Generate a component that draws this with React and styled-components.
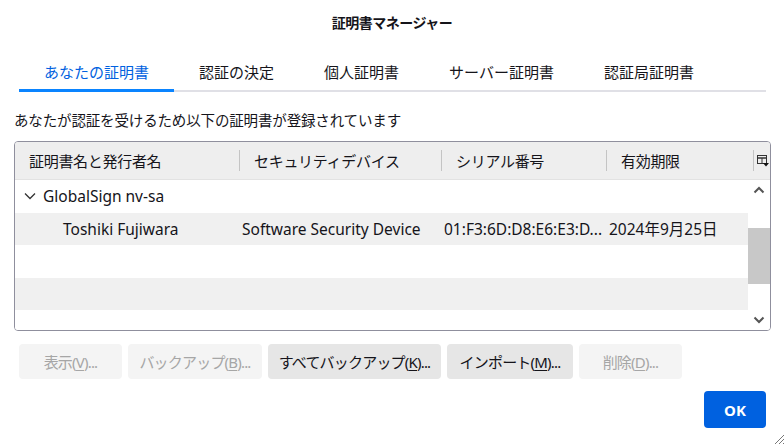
import React from 'react';
import styled, { createGlobalStyle } from 'styled-components';

const GlobalStyle = createGlobalStyle`
  html, body {
    margin: 0;
    padding: 0;
    background: #ffffff;
  }
  body {
    font-family: "Noto Sans", "Noto Sans CJK JP", sans-serif;
    color: #15141a;
  }
`;

const tabs = ['あなたの証明書', '認証の決定', '個人証明書', 'サーバー証明書', '認証局証明書'];

const columns = [
  { title: '証明書名と発行者名', width: 224 },
  { title: 'セキュリティデバイス', width: 202 },
  { title: 'シリアル番号', width: 165 },
  { title: '有効期限', width: 147 },
];

const buttons = [
  { label: '表示', key: 'V', width: 103, disabled: true },
  { label: 'バックアップ', key: 'B', width: 134, disabled: true },
  { label: 'すべてバックアップ', key: 'K', width: 173, disabled: false },
  { label: 'インポート', key: 'M', width: 126, disabled: false },
  { label: '削除', key: 'D', width: 103, disabled: true },
];

function App() {
  return (
    <>
      <GlobalStyle />
      <Dialog>
        <Title>証明書マネージャー</Title>
        <TabBar>
          {tabs.map((t, i) => (
            <Tab key={t} $active={i === 0}>{t}</Tab>
          ))}
        </TabBar>
        <Description>あなたが認証を受けるため以下の証明書が登録されています</Description>
        <TableBox>
          <HeaderRow>
            {columns.map((c, i) => (
              <HeaderCell key={c.title} $width={c.width} $sep={i > 0}>{c.title}</HeaderCell>
            ))}
            <PickerCell>
              <svg width="12" height="12" viewBox="0 0 12 12">
                <rect x="0.5" y="0.5" width="9" height="8" fill="none" stroke="#333" strokeWidth="1" />
                <line x1="0.5" y1="3" x2="9.5" y2="3" stroke="#333" strokeWidth="1.4" />
                <line x1="5" y1="3" x2="5" y2="8.5" stroke="#333" strokeWidth="1" />
                <path d="M6 8 L12 8 L9 11.5 Z" fill="#111" />
              </svg>
            </PickerCell>
          </HeaderRow>
          <Body>
            <Rows>
              <Row>
                <GroupCell>
                  <svg width="12" height="8" viewBox="0 0 12 8">
                    <path d="M1 1.5 L6 6.5 L11 1.5" fill="none" stroke="#333" strokeWidth="1.3" />
                  </svg>
                  GlobalSign nv-sa
                </GroupCell>
              </Row>
              <Row $shade>
                <Cell $width={224} $indent={48}>Toshiki Fujiwara</Cell>
                <Cell $width={202}>Software Security Device</Cell>
                <Cell $width={165}>01:F3:6D:D8:E6:E3:D...</Cell>
                <Cell>2024年9月25日</Cell>
              </Row>
              <Row />
              <Row $shade />
              <Row />
            </Rows>
            <ScrollBar>
              <ArrowBox>
                <svg width="12" height="8" viewBox="0 0 12 8">
                  <path d="M1.5 6.5 L6 2 L10.5 6.5" fill="none" stroke="#555" strokeWidth="2" />
                </svg>
              </ArrowBox>
              <Track>
                <Thumb />
              </Track>
              <ArrowBox>
                <svg width="12" height="8" viewBox="0 0 12 8">
                  <path d="M1.5 1.5 L6 6 L10.5 1.5" fill="none" stroke="#555" strokeWidth="2" />
                </svg>
              </ArrowBox>
            </ScrollBar>
          </Body>
        </TableBox>
        <ButtonRow>
          {buttons.map((b) => (
            <ActionButton key={b.key} $width={b.width} $disabled={b.disabled}>
              {b.label}(<u>{b.key}</u>)...
            </ActionButton>
          ))}
        </ButtonRow>
        <Footer>
          <OkButton>OK</OkButton>
        </Footer>
        <Grip>
          <svg width="14" height="14" viewBox="0 0 14 14">
            <line x1="14" y1="2" x2="2" y2="14" stroke="#777" strokeWidth="1" />
            <line x1="14" y1="6" x2="6" y2="14" stroke="#777" strokeWidth="1" />
            <line x1="14" y1="10" x2="10" y2="14" stroke="#777" strokeWidth="1" />
          </svg>
        </Grip>
      </Dialog>
    </>
  );
}

const Dialog = styled.div`
  position: relative;
  width: 784px;
  height: 444px;
  box-sizing: border-box;
  display: flex;
  flex-direction: column;
  overflow: hidden;
`;

const Title = styled.div`
  height: 44px;
  display: flex;
  align-items: center;
  justify-content: center;
  font-size: 14px;
  font-weight: 700;
  letter-spacing: -0.5px;
`;

const TabBar = styled.div`
  display: flex;
  margin: 9px 18px 0 19px;
  border-bottom: 2px solid #e0e0e6;
`;

const Tab = styled.div`
  padding: 0 25px;
  height: 36px;
  display: flex;
  align-items: center;
  font-size: 15px;
  margin-bottom: -2px;
  color: ${(p) => (p.$active ? '#0061e0' : '#15141a')};
  border-bottom: 3px solid ${(p) => (p.$active ? '#0a84ff' : 'transparent')};
`;

const Description = styled.div`
  margin: 18px 0 0 14px;
  height: 20px;
  line-height: 20px;
  font-size: 14.5px;
  letter-spacing: -0.15px;
`;

const TableBox = styled.div`
  margin: 11px 13px 0 14px;
  height: 190px;
  box-sizing: border-box;
  border: 1px solid #8f8f9d;
  border-radius: 4px;
  display: flex;
  flex-direction: column;
  overflow: hidden;
`;

const HeaderRow = styled.div`
  height: 37px;
  flex: none;
  display: flex;
  background: #eeeeee;
  border-bottom: 1px solid #e2e2e2;
`;

const HeaderCell = styled.div`
  width: ${(p) => p.$width}px;
  flex: none;
  box-sizing: border-box;
  display: flex;
  align-items: center;
  padding-left: ${(p) => (p.$sep ? 15 : 14)}px;
  font-size: 15px;
  letter-spacing: -0.3px;
  position: relative;
  &::before {
    content: '';
    display: ${(p) => (p.$sep ? 'block' : 'none')};
    position: absolute;
    left: 0;
    top: 8px;
    bottom: 8px;
    width: 1px;
    background: #c4c4c4;
  }
`;

const PickerCell = styled.div`
  flex: 1;
  display: flex;
  align-items: center;
  justify-content: center;
  border-left: 1px solid #c4c4c4;
  margin: 8px 0;
  padding-left: 2px;
`;

const Body = styled.div`
  flex: 1;
  display: flex;
  min-height: 0;
`;

const Rows = styled.div`
  flex: 1;
  display: flex;
  flex-direction: column;
  overflow: hidden;
`;

const Row = styled.div`
  height: 32.5px;
  flex: none;
  display: flex;
  align-items: center;
  background: ${(p) => (p.$shade ? '#f0f0f0' : '#ffffff')};
`;

const GroupCell = styled.div`
  display: flex;
  align-items: center;
  gap: 7px;
  padding-left: 9px;
  font-size: 15.5px;
`;

const Cell = styled.div`
  width: ${(p) => (p.$width ? `${p.$width}px` : 'auto')};
  flex: ${(p) => (p.$width ? 'none' : '1')};
  box-sizing: border-box;
  padding-left: ${(p) => p.$indent || 3}px;
  font-size: 15.5px;
  white-space: nowrap;
  overflow: hidden;
`;

const ScrollBar = styled.div`
  width: 22px;
  flex: none;
  display: flex;
  flex-direction: column;
  background: #ffffff;
`;

const ArrowBox = styled.div`
  height: 20px;
  display: flex;
  align-items: center;
  justify-content: center;
`;

const Track = styled.div`
  flex: 1;
  padding-top: 28px;
`;

const Thumb = styled.div`
  height: 56px;
  background: #c8c8c8;
`;

const ButtonRow = styled.div`
  display: flex;
  gap: 6px;
  margin: 13px 0 0 19px;
`;

const ActionButton = styled.div`
  width: ${(p) => p.$width}px;
  height: 35px;
  flex: none;
  display: flex;
  align-items: center;
  justify-content: center;
  white-space: nowrap;
  border-radius: 4px;
  font-size: 15px;
  letter-spacing: -0.8px;
  background: ${(p) => (p.$disabled ? '#f4f4f4' : '#e6e6e6')};
  color: ${(p) => (p.$disabled ? '#a6a6a6' : '#15141a')};
  u {
    text-decoration-thickness: 1px;
    text-underline-offset: 2px;
  }
`;

const Footer = styled.div`
  display: flex;
  justify-content: flex-end;
  margin: 12px 18px 0 0;
`;

const OkButton = styled.div`
  width: 62px;
  height: 37px;
  display: flex;
  align-items: center;
  justify-content: center;
  border-radius: 4px;
  background: #0061e0;
  color: #ffffff;
  font-size: 15px;
  font-weight: 700;
`;

const Grip = styled.div`
  position: absolute;
  right: 0;
  bottom: 0;
  width: 14px;
  height: 14px;
`;

export default App;
